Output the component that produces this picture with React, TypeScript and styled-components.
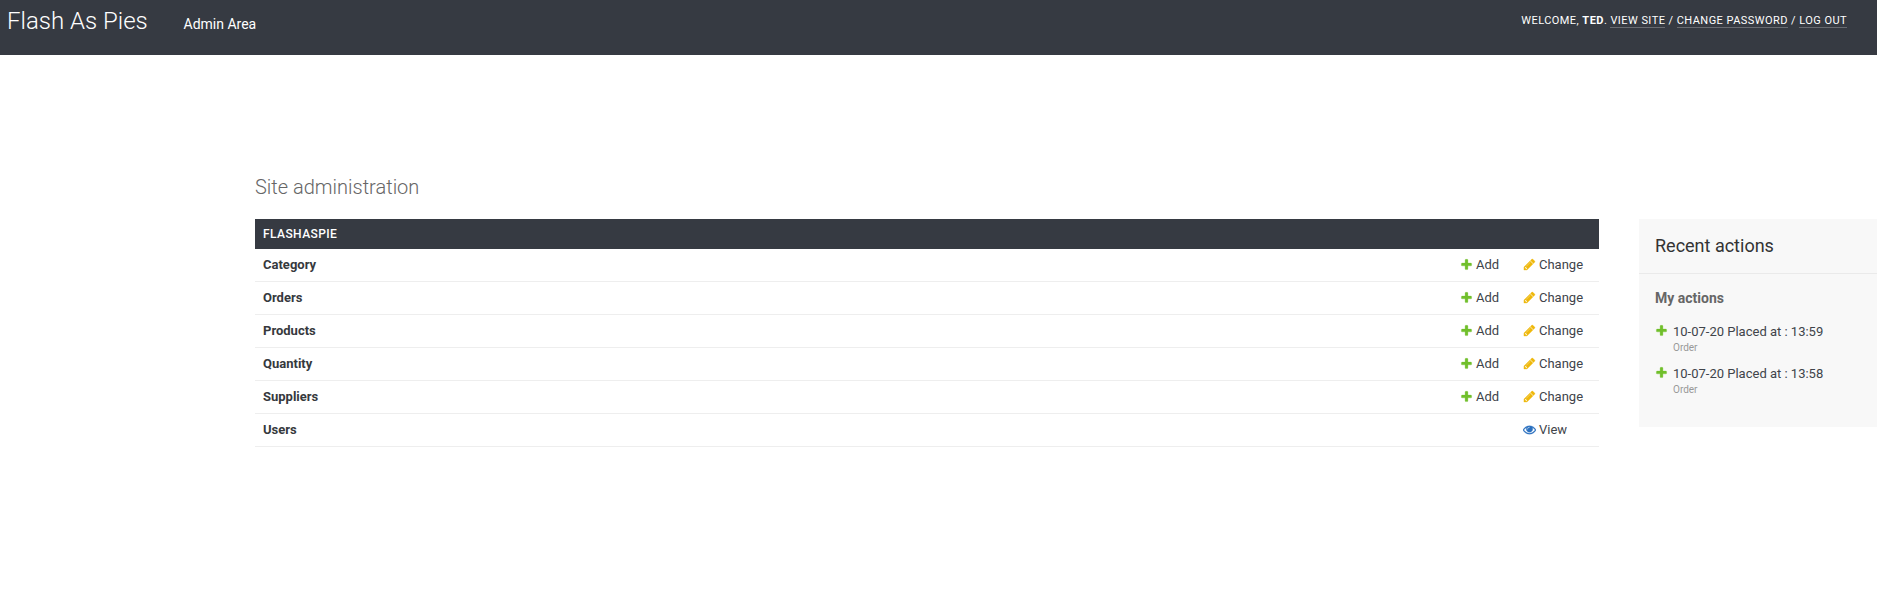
import React from "react";
import styled, { createGlobalStyle } from "styled-components";

const GlobalStyle = createGlobalStyle`
  html, body { margin: 0; padding: 0; overflow: hidden; }
  body {
    background: #fff;
    color: #333;
    font-family: Roboto, "Liberation Sans", sans-serif;
    font-size: 13px;
  }
  *, *::before, *::after { box-sizing: border-box; }
`;

const Page = styled.div`
  width: 1877px;
  height: 607px;
  overflow: hidden;
`;

const Header = styled.header`
  display: flex;
  align-items: flex-start;
  height: 55px;
  padding: 0 30px 0 7px;
  background: #363a42;
  color: #fff;
`;

const SiteName = styled.h1`
  margin: 7px 0 0;
  width: 176.5px;
  font-size: 24px;
  font-weight: 300;
  line-height: 29px;
`;

const AreaName = styled.a`
  flex: 1;
  margin-top: 16px;
  font-size: 14px;
  line-height: 16px;
`;

const UserTools = styled.div`
  margin-top: 14px;
  font-size: 11px;
  font-weight: 400;
  line-height: 14px;
  letter-spacing: 0.45px;
  text-transform: uppercase;
  white-space: nowrap;

  strong { font-weight: 700; }
`;

const ToolLink = styled.a`
  border-bottom: 1px solid rgba(255, 255, 255, 0.25);
`;

const Content = styled.main`
  padding: 121px 0 0 255px;
`;

const Title = styled.h1`
  margin: 0 0 20px;
  color: #666;
  font-size: 20px;
  font-weight: 300;
  line-height: 23px;
`;

const Columns = styled.div`
  display: flex;
  align-items: flex-start;
  gap: 40px;
`;

const Module = styled.section`
  width: 1344px;
`;

const Caption = styled.h2`
  margin: 0;
  height: 30px;
  padding: 0 8px;
  background: #363a42;
  color: #fff;
  font-size: 12px;
  font-weight: 500;
  line-height: 30px;
  letter-spacing: 0.42px;
  text-transform: uppercase;
`;

const Row = styled.div`
  display: flex;
  height: 33px;
  padding: 0 0 0 8px;
  border-bottom: 1px solid #eee;
  line-height: 32px;
`;

const ModelName = styled.a`
  flex: 1;
  color: #36393d;
  font-weight: 700;
`;

const Action = styled.a<{ $width: number }>`
  display: flex;
  align-items: flex-start;
  gap: 3px;
  width: ${(p) => p.$width}px;
  color: #40444a;

  svg { margin-top: 9px; }
`;

const Icon = styled.svg`
  display: block;
  flex: none;
  width: 13px;
  height: 13px;
`;

const Sidebar = styled.aside`
  flex: 1;
  height: 208px;
  background: #f8f8f8;
`;

const SideTitle = styled.h2`
  margin: 0;
  height: 55px;
  padding: 16px;
  border-bottom: 1px solid #eaeaea;
  color: #333;
  font-size: 18px;
  font-weight: 400;
  line-height: 22px;
`;

const SideHeading = styled.h3`
  margin: 0;
  padding: 16px 16px 0;
  color: #666;
  font-size: 14px;
  font-weight: 700;
  line-height: 17px;
`;

const ActionList = styled.ul`
  margin: 0;
  padding: 17px 16px 0;
  list-style: none;
`;

const ActionItem = styled.li`
  display: flex;
  gap: 5px;
  height: 42px;
`;

const EntryLink = styled.a`
  display: block;
  color: #40444a;
  font-size: 13px;
  line-height: 16px;
`;

const EntryKind = styled.span`
  display: block;
  color: #999;
  font-size: 10px;
  line-height: 15px;
`;

type IconKind = "add" | "change" | "view";

const ICONS: Record<IconKind, { fill: string; d: string }> = {
  add: {
    fill: "#70bf2b",
    d: "M1600 796v192q0 40-28 68t-68 28h-416v416q0 40-28 68t-68 28h-192q-40 0-68-28t-28-68v-416h-416q-40 0-68-28t-28-68v-192q0-40 28-68t68-28h416v-416q0-40 28-68t68-28h192q40 0 68 28t28 68v416h416q40 0 68 28t28 68z",
  },
  change: {
    fill: "#efb80b",
    d: "M491 1536l91-91-235-235-91 91v107h128v128h107zm523-928q0-22-22-22-10 0-17 7l-542 542q-7 7-7 17 0 22 22 22 10 0 17-7l542-542q7-7 7-17zm-54-192l416 416-832 832h-416v-416zm683 96q0 53-37 90l-166 166-416-416 166-165q36-38 90-38 53 0 91 38l235 234q37 39 37 91z",
  },
  view: {
    fill: "#2b70bf",
    d: "M1664 960q-152-236-381-353 61 104 61 225 0 185-131.5 316.5t-316.5 131.5-316.5-131.5-131.5-316.5q0-121 61-225-229 117-381 353 133 205 333.5 326.5t434.5 121.5 434.5-121.5 333.5-326.5zm-720-384q0-20-14-34t-34-14q-125 0-214.5 89.5t-89.5 214.5q0 20 14 34t34 14 34-14 14-34q0-86 61-147t147-61q20 0 34-14t14-34zm848 384q0 34-20 69-140 230-376.5 368.5t-499.5 138.5-499.5-139-376.5-368q-20-35-20-69t20-69q140-229 376.5-368t499.5-139 499.5 139 376.5 368q20 35 20 69z",
  },
};

function Glyph({ kind }: { kind: IconKind }) {
  const { fill, d } = ICONS[kind];
  return (
    <Icon viewBox="0 0 1792 1792" aria-hidden="true">
      <path fill={fill} stroke={fill} strokeWidth={40} d={d} />
    </Icon>
  );
}

const MODELS = [
  { name: "Category", editable: true },
  { name: "Orders", editable: true },
  { name: "Products", editable: true },
  { name: "Quantity", editable: true },
  { name: "Suppliers", editable: true },
  { name: "Users", editable: false },
];

const RECENT = ["10-07-20 Placed at : 13:59", "10-07-20 Placed at : 13:58"];

export default function App() {
  return (
    <Page>
      <GlobalStyle />
      <Header>
        <SiteName>Flash As Pies</SiteName>
        <AreaName>Admin Area</AreaName>
        <UserTools>
          Welcome, <strong>Ted</strong>. <ToolLink>View site</ToolLink> /{" "}
          <ToolLink>Change password</ToolLink> / <ToolLink>Log out</ToolLink>
        </UserTools>
      </Header>
      <Content>
        <Title>Site administration</Title>
        <Columns>
          <Module>
            <Caption>Flashaspie</Caption>
            {MODELS.map((m) => (
              <Row key={m.name}>
                <ModelName>{m.name}</ModelName>
                {m.editable && (
                  <Action $width={63}>
                    <Glyph kind="add" />
                    Add
                  </Action>
                )}
                <Action $width={76}>
                  <Glyph kind={m.editable ? "change" : "view"} />
                  {m.editable ? "Change" : "View"}
                </Action>
              </Row>
            ))}
          </Module>
          <Sidebar>
            <SideTitle>Recent actions</SideTitle>
            <SideHeading>My actions</SideHeading>
            <ActionList>
              {RECENT.map((entry) => (
                <ActionItem key={entry}>
                  <Glyph kind="add" />
                  <div>
                    <EntryLink>{entry}</EntryLink>
                    <EntryKind>Order</EntryKind>
                  </div>
                </ActionItem>
              ))}
            </ActionList>
          </Sidebar>
        </Columns>
      </Content>
    </Page>
  );
}
